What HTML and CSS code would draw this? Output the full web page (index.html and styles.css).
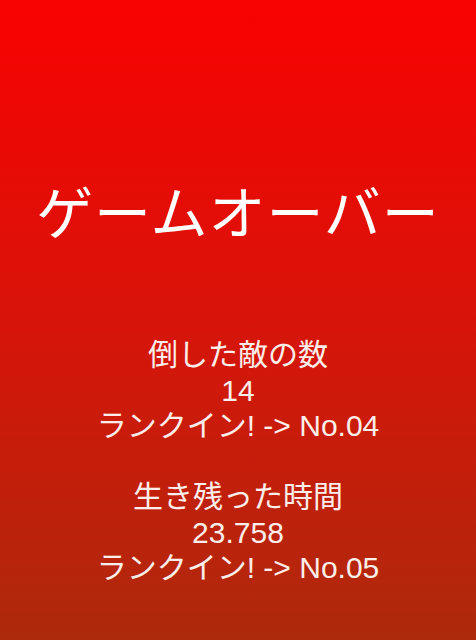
FILE: index.html
```html
<!DOCTYPE html>
<html lang="ja">

<head>
  <meta charset="UTF-8" />
  <meta name="viewport" content="width=device-width, initial-scale=1.0" />
  <title>ゲームオーバー</title>
  <link rel="stylesheet" href="styles.css">
</head>

<body>
  <div class="screen">
    <h1 class="title">ゲームオーバー</h1>

    <div class="result">
      <div class="result-block">
        <p>倒した敵の数</p>
        <p>14</p>
        <p>ランクイン! -&gt; No.04</p>
      </div>
      <div class="result-block">
        <p>生き残った時間</p>
        <p>23.758</p>
        <p>ランクイン! -&gt; No.05</p>
      </div>
    </div>
  </div>
</body>

</html>
```

FILE: styles.css
```css
* {
  box-sizing: border-box;
  margin: 0;
  padding: 0;
  font-family: "Liberation Sans", "Noto Sans CJK JP", sans-serif;
}

html,
body {
  height: 100%;
}

body {
  background: linear-gradient(to bottom, #f80200 0%, #d8140a 50%, #ad2a0c 100%);
  color: #fff;
}

.screen {
  display: flex;
  flex-direction: column;
  align-items: center;
  min-height: 100%;
  padding-top: 182px;
}

.title {
  font-size: 57px;
  font-weight: normal;
  line-height: 64px;
  letter-spacing: 1px;
}

.result {
  display: flex;
  flex-direction: column;
  gap: 35.5px;
  margin-top: 91px;
  text-align: center;
}

.result-block p {
  font-size: 30px;
  line-height: 35.5px;
  color: #fbeeea;
}
```
